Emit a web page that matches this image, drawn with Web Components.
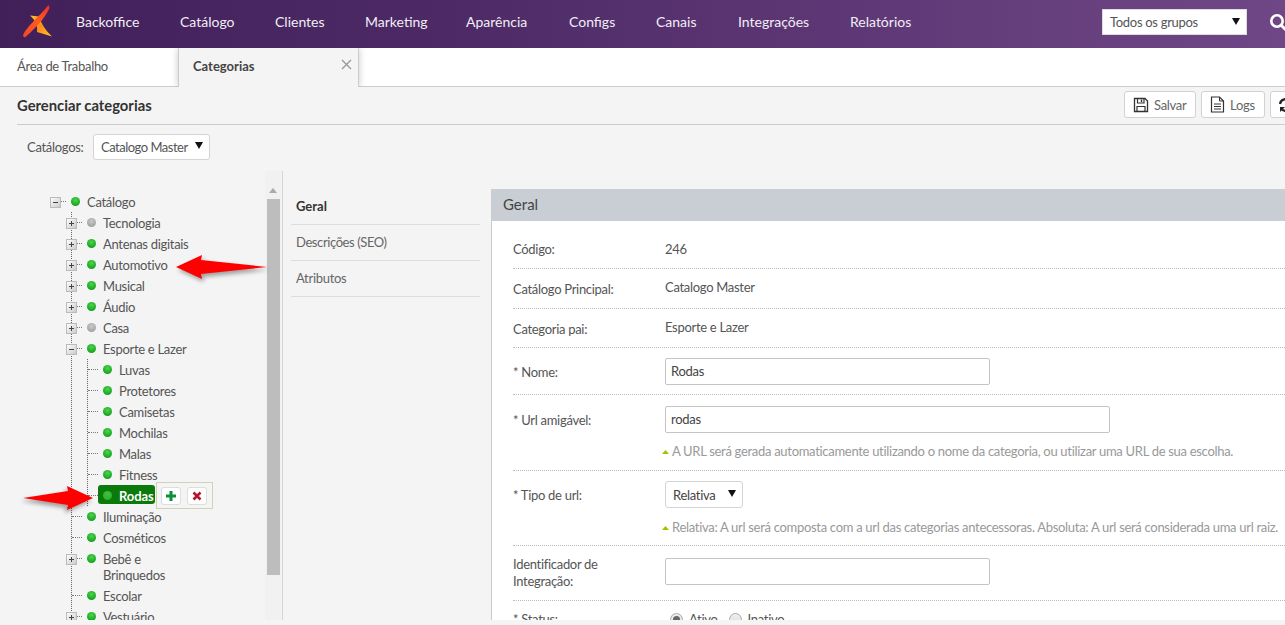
<!DOCTYPE html>
<html lang="pt-BR"><head><meta charset="utf-8"><title>Gerenciar categorias</title>
<style>
html,body{margin:0;padding:0;height:625px;overflow:hidden;background:#f4f4f4;font-family:"Lato","Noto Sans",sans-serif;font-size:13px;color:#555;letter-spacing:-.3px}
</style></head><body>
<app-header></app-header>
<tab-bar></tab-bar>
<page-head></page-head>
<catalog-row></catalog-row>
<work-area></work-area>
<script>
function def(name, css, html){
  customElements.define(name, class extends HTMLElement{
    constructor(){super();const s=this.attachShadow({mode:'open'});s.innerHTML='<style>'+css+'</style>'+(typeof html==='function'?html(this):html);}
  });
}
const caret=`<svg width="8" height="7" viewBox="0 0 8 7"><path d="M0 0H8L4 7Z" fill="#111"/></svg>`;

def('select-box',`:host{display:inline-flex;align-items:center;justify-content:space-between;box-sizing:border-box;background:#fff;border:1px solid #d4d4d4;border-radius:3px;padding:0 6px 0 7px;font-size:13px;color:#555;height:27px;white-space:nowrap}
 svg{margin-bottom:2px;flex:none}`,`<slot></slot>${caret}`);

def('app-header',`:host{display:flex;align-items:center;height:48px;background:linear-gradient(90deg,#41205a 0%,#4d2a66 35%,#704786 100%);color:#f2eef5;position:relative;overflow:hidden}
 svg.logo{position:absolute;left:0;top:0}
 nav{display:grid;grid-template-columns:104px 95px 90px 101px 103px 87px 82px 112px auto;margin:-6px 0 0 76px;font-size:14px;white-space:nowrap;letter-spacing:0}
 select-box{position:absolute;left:1102px;top:9px;width:145px;height:26px;border-radius:0;border-color:#ddd;padding:0 6px 0 7px}
 svg.search{position:absolute;left:1269px;top:13px}`,
 `<svg class="logo" width="70" height="48" viewBox="0 0 70 48"><defs>
   <linearGradient id="a" x1="0" y1="1" x2="1" y2="0"><stop offset="0" stop-color="#f2452c"/><stop offset=".55" stop-color="#ff5a1f"/><stop offset="1" stop-color="#e8302e"/></linearGradient>
   <linearGradient id="b" x1="0" y1="0" x2="1" y2="1"><stop offset="0" stop-color="#ffc02a"/><stop offset=".5" stop-color="#ff8a1c"/><stop offset="1" stop-color="#ffc81f"/></linearGradient></defs>
   <path d="M30 15.5 39 16.5C41 23 46 31 52 36.5L37 32C38 25 35 20 30 15.5Z" fill="url(#b)"/>
   <path d="M48.5 5 49.5 8C46 16 40 24 25 37.5L23 36C24 29 39 17 48.5 5Z" fill="url(#a)"/></svg>
  <nav><span>Backoffice</span><span>Catálogo</span><span>Clientes</span><span>Marketing</span><span>Aparência</span><span>Configs</span><span>Canais</span><span>Integrações</span><span>Relatórios</span></nav>
  <select-box>Todos os grupos</select-box>
  <svg class="search" width="20" height="20" viewBox="0 0 20 20"><circle cx="8" cy="8" r="5.7" fill="none" stroke="#fff" stroke-width="2.6"/><path d="M12 12l5 5" stroke="#fff" stroke-width="3"/></svg>`);

def('tab-bar',`:host{display:flex;height:38px;box-sizing:content-box;background:#fff;border-bottom:1px solid #ccc;font-size:13px}
 .t{display:flex;align-items:center;box-sizing:border-box;padding:0 0 2px 17px;width:178px;color:#555}
 .a{position:relative;width:181px;height:39px;padding:0 0 3px 14px;font-weight:700;color:#444;letter-spacing:0;background:#f4f4f4;border-left:1px solid #ccc;border-right:1px solid #ccc;box-shadow:0 0 7px rgba(0,0,0,.22);clip-path:inset(0 -10px 0 -10px)}
 .a svg{position:absolute;left:162px;top:11px}`,
 `<div class="t">Área de Trabalho</div><div class="t a">Categorias<svg width="11" height="11" viewBox="0 0 11 11"><path d="M1 1l9 9M10 1l-9 9" stroke="#999" stroke-width="1.4"/></svg></div>`);

def('tool-btn',`:host{display:inline-flex;align-items:center;gap:5px;box-sizing:border-box;height:27px;background:#fff;border:1px solid #d2d2d2;border-radius:3px;padding:0 8px;font-size:13px;color:#666;flex:none}`,`<slot name="i"></slot><slot></slot>`);

def('page-head',`:host{display:flex;align-items:center;height:37px;margin-left:17px;border-bottom:1px solid #ccc;overflow:hidden}
 h1{margin:0 0 2px;font-size:14.8px;font-weight:700;color:#333;width:1107px;flex:none;letter-spacing:0}
 .b{display:flex;gap:5px;flex:none;margin-top:-2px}`,
 `<h1>Gerenciar categorias</h1><div class="b">
  <tool-btn style="width:72px"><svg slot="i" width="16" height="16" viewBox="0 0 16 16"><path d="M1.5 1.5H12L14.5 4V14.5H1.5Z" fill="none" stroke="#333" stroke-width="1.3"/><path d="M4.5 1.5V6H11V1.5M4 14.5V9.5H12V14.5" fill="none" stroke="#333" stroke-width="1.2"/><path d="M8.5 2.5V5" stroke="#333" stroke-width="1.4"/></svg>Salvar</tool-btn>
  <tool-btn style="width:64px"><svg slot="i" width="15" height="17" viewBox="0 0 15 17"><path d="M1.5 1H9.5L13.5 5V16H1.5Z" fill="none" stroke="#333" stroke-width="1.2"/><path d="M9.5 1V5H13.5M4 8H11M4 10.5H11M4 13H11" fill="none" stroke="#333" stroke-width="1"/></svg>Logs</tool-btn>
  <tool-btn style="width:60px;padding-left:7px"><svg slot="i" width="16" height="16" viewBox="0 0 16 16"><path d="M2 7a6 5.5 0 0 1 10.5-3" fill="none" stroke="#222" stroke-width="2.2"/><path d="M14 1v5H9Z" fill="#222"/><path d="M14 9a6 5.5 0 0 1-10.5 3" fill="none" stroke="#222" stroke-width="2.2"/><path d="M2 15v-5h5Z" fill="#222"/></svg></tool-btn>
 </div>`);

def('catalog-row',`:host{display:flex;align-items:center;height:46px;padding-left:27px;font-size:13px}
 span{width:66px;flex:none;margin-top:-3px}
 select-box{width:117px;height:26px;margin-top:-3px;letter-spacing:-.5px}`,`<span>Catálogos:</span><select-box>Catalogo Master</select-box>`);

const box=`<svg class="ex" width="11" height="11" viewBox="0 0 11 11"><defs><linearGradient id="g" x1="0" y1="0" x2="1" y2="1"><stop offset="0" stop-color="#fff"/><stop offset="1" stop-color="#c9c9c9"/></linearGradient></defs><rect x=".5" y=".5" width="10" height="10" fill="url(#g)" stroke="#bbb"/><path d="M3 5.5H8" stroke="#444"/></svg>`;
def('tree-node',`:host{display:block;font-size:13px;color:#555}
 .r{display:flex;align-items:flex-start;position:relative;min-height:21px;line-height:16px;padding:2.5px 0;box-sizing:border-box}
 .c{flex:none;height:0;border-top:1px dotted #777;margin:7px 5px 0 0;width:10px}
 .ex{flex:none;margin:3px 0 0 -6px;display:block}
 .ex+.c{width:5px}
 .d{flex:none;width:9px;height:9px;border-radius:50%;margin-top:3px;background:radial-gradient(circle at 50% 35%,#4fd44f,#17a61f 70%,#118a1a)}
 .g .d{background:radial-gradient(circle at 50% 35%,#c9c9c9,#a5a5a5 70%,#909090)}
 .l{margin-left:7px;width:92px}
 .kids{margin-left:15px;border-left:1px dotted #666}
 .p{display:flex;align-items:flex-start}
 :host([selected]) .p{background:#0a7a0a;border-radius:3px;height:19px;margin-top:-3px;padding:3px 0 0 5px;box-sizing:border-box;width:57px}
 :host([selected]) .l{width:auto;color:#fff;font-weight:700;letter-spacing:-.1px}
 :host([selected]) .c{width:10px;margin-right:0}
 :host([selected]) .d{background:radial-gradient(circle at 50% 35%,#3fc43f,#2aa72a)}
 .act{position:absolute;left:68px;top:-3px;box-sizing:border-box;width:57px;height:27px;border:1px solid #cfd3b4;background:#f4f4f4;display:flex;align-items:center;gap:6px;padding-left:4px}
 .act b{display:flex;align-items:center;justify-content:center;box-sizing:border-box;width:20px;height:18px;background:#fff;border:1px solid #ddd;border-radius:3px}`,
 el=>{
  const has=el.hasAttribute('more'), open=el.hasAttribute('open'), gray=el.hasAttribute('gray'), sel=el.hasAttribute('selected');
  const ex=open?box:has?box.replace('M3 5.5H8','M3 5.5H8M5.5 3V8'):'';
  const act=sel?`<div class="act"><b><svg width="12" height="12" viewBox="0 0 12 12"><path d="M6 1V11M1 6H11" stroke="#0c8f3a" stroke-width="3"/></svg></b><b><svg width="10" height="10" viewBox="0 0 10 10"><path d="M1.5 1.5l7 7M8.5 1.5l-7 7" stroke="#b5142b" stroke-width="2.6"/></svg></b></div>`:'';
  return `<div class="r ${gray?'g':''}">${ex}<span class="c"></span><div class="p"><span class="d"></span><span class="l">${el.getAttribute('label')}</span></div>${act}</div>${open?'<div class="kids"><slot></slot></div>':''}`;
 });

def('tree-pane',`:host{display:block;position:relative;width:266px;height:449px;box-sizing:border-box;border-right:1px solid #d4d4d4;overflow:hidden;flex:none}
 .in{padding:20px 0 0 39px;width:230px;box-sizing:border-box}
 .sb{position:absolute;left:248px;top:0;width:16px;height:449px;background:#f1f1f1}
 .sb i{position:absolute;left:2px;top:28px;width:13px;height:376px;background:#bdbdbd}
 .sb svg{position:absolute;left:4px;top:17px}`,
 `<div class="in"><slot></slot></div><div class="sb"><svg width="8" height="5" viewBox="0 0 8 5"><path d="M0 5L4 0 8 5Z" fill="#aaa"/></svg><i></i></div>`);

def('red-arrow',`:host{position:absolute;display:block;pointer-events:none;line-height:0;filter:drop-shadow(2px 3px 2px rgba(0,0,0,.35))}`,
 el=>{const w=el.getAttribute('w');return `<svg width="${w}" height="24" viewBox="0 0 ${w} 24"><path d="M0 12 26 0 25 5 ${w} 12 25 19 26 24Z" fill="#f00"/></svg>`;});

def('side-nav',`:host{display:block;width:189px;margin:18px 0 0 8px;flex:none;font-size:13px;color:#666}
 div{height:36px;box-sizing:border-box;border-bottom:1px solid #ddd;padding:0 0 2px 5px;display:flex;align-items:center}
 .a{font-weight:700;color:#333;letter-spacing:0}`,`<div class="a">Geral</div><div style="letter-spacing:-.4px">Descrições (SEO)</div><div>Atributos</div>`);

def('form-row',`:host{display:grid;grid-template-columns:152px 1fr;box-sizing:border-box;border-bottom:1px dotted #bbb;align-items:start;font-size:13px;color:#555}
 .lb{line-height:17px;padding-top:var(--lt,0)}
 .v{padding-top:var(--vt,0)}`,`<div class="lb"><slot name="label"></slot></div><div class="v"><slot></slot></div>`);

def('text-in',`:host{display:block;box-sizing:border-box;height:27px;background:#fff;border:1px solid #c4c4c4;border-radius:2px;padding:0 5px;line-height:25px;font-size:13px;color:#444}`,`<slot></slot>`);

def('hint-text',`:host{display:block;font-size:13px;color:#999;white-space:nowrap;margin:10px 0 0 -3px}
 svg{margin-right:3px;vertical-align:2px}`,`<svg width="7" height="4" viewBox="0 0 7 4"><path d="M0 4L3.5 0 7 4Z" fill="#9cc400"/></svg><slot></slot>`);

def('radio-dot',`:host{display:inline-flex;align-items:center;gap:6px}
 i{box-sizing:border-box;width:13px;height:13px;border-radius:50%;border:1px solid #aaa;background:linear-gradient(#eee,#ddd);display:flex;align-items:center;justify-content:center}
 :host([on]) i::after{content:"";width:7px;height:7px;border-radius:50%;background:#666}`,`<i></i><slot></slot>`);

def('form-panel',`:host{display:block;width:794px;flex:none;margin:18px 0 0 11px;overflow:hidden;height:431px}
 header{height:32px;box-sizing:border-box;background:#c8ced4;padding:0 0 0 12px;line-height:31px;font-size:15px;color:#444;letter-spacing:0}
 .b{background:#fff;border-left:1px solid #ccc;padding:0 0 0 21px;height:399px;overflow:hidden}`,
 `<header>Geral</header><div class="b"><slot></slot></div>`);

def('work-area',`:host{display:flex;height:449px;overflow:hidden;position:relative}`,`<tree-pane style="margin-left:17px">
  <tree-node label="Catálogo" open>
   <tree-node label="Tecnologia" more gray></tree-node>
   <tree-node label="Antenas digitais" more></tree-node>
   <tree-node label="Automotivo" more></tree-node>
   <tree-node label="Musical" more></tree-node>
   <tree-node label="Áudio" more></tree-node>
   <tree-node label="Casa" more gray></tree-node>
   <tree-node label="Esporte e Lazer" open>
    <tree-node label="Luvas"></tree-node>
    <tree-node label="Protetores"></tree-node>
    <tree-node label="Camisetas"></tree-node>
    <tree-node label="Mochilas"></tree-node>
    <tree-node label="Malas"></tree-node>
    <tree-node label="Fitness"></tree-node>
    <tree-node label="Rodas" selected></tree-node>
   </tree-node>
   <tree-node label="Iluminação"></tree-node>
   <tree-node label="Cosméticos"></tree-node>
   <tree-node label="Bebê e Brinquedos" more></tree-node>
   <tree-node label="Escolar"></tree-node>
   <tree-node label="Vestuário" more></tree-node>
  </tree-node>
 </tree-pane>
 <side-nav></side-nav>
 <form-panel>
  <form-row style="height:48px;--lt:20px;--vt:20px"><span slot="label">Código:</span>246</form-row>
  <form-row style="height:40px;--lt:12px;--vt:10px"><span slot="label">Catálogo Principal:</span>Catalogo Master</form-row>
  <form-row style="height:39px;--lt:12px;--vt:10px"><span slot="label">Categoria pai:</span>Esporte e Lazer</form-row>
  <form-row style="height:47px;--lt:16px;--vt:10px"><span slot="label">* Nome:</span><text-in style="width:325px">Rodas</text-in></form-row>
  <form-row style="height:76px;--lt:17px;--vt:11px"><span slot="label">* Url amigável:</span><text-in style="width:445px">rodas</text-in><hint-text>A URL será gerada automaticamente utilizando o nome da categoria, ou utilizar uma URL de sua escolha.</hint-text></form-row>
  <form-row style="height:75px;--lt:16px;--vt:10px"><span slot="label">* Tipo de url:</span><select-box style="width:78px;color:#444">Relativa</select-box><hint-text style="margin-top:11px">Relativa: A url será composta com a url das categorias antecessoras. Absoluta: A url será considerada uma url raiz.</hint-text></form-row>
  <form-row style="height:55px;--lt:10px;--vt:12px"><span slot="label">Identificador de<br>Integração:</span><text-in style="width:325px"></text-in></form-row>
  <form-row style="height:40px;--lt:10px;--vt:10px;border:0"><span slot="label">* Status:</span><span style="display:flex;gap:11px;margin-left:5px"><radio-dot on>Ativo</radio-dot><radio-dot>Inativo</radio-dot></span></form-row>
 </form-panel>
 <red-arrow w="91" style="left:176px;top:84px"></red-arrow>
 <red-arrow w="70" style="left:23px;top:315px;transform:scaleX(-1)"></red-arrow>`);
</script>
</body></html>
